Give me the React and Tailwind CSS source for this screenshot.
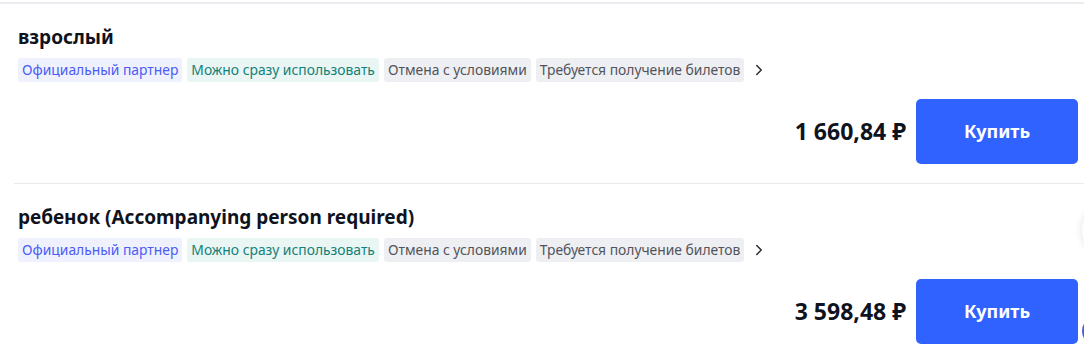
import { ChevronRight } from "lucide-react";

const tags = [
  { text: "Официальный партнер", cls: "bg-[#eff1ff] text-[#4b5cf5]" },
  { text: "Можно сразу использовать", cls: "bg-[#e9f6f4] text-[#13807a]" },
  { text: "Отмена с условиями", cls: "bg-[#eeeff2] text-[#51545c]" },
  { text: "Требуется получение билетов", cls: "bg-[#eeeff2] text-[#51545c]" },
];

const tickets = [
  { title: "взрослый", price: "1 660,84 ₽" },
  { title: "ребенок (Accompanying person required)", price: "3 598,48 ₽" },
];

const TicketRow = ({ title, price }) => {
  return (
    <div className="ml-[14px] border-b border-[#e9e9ee] pl-[4px] pr-[6px] pt-[21px] pb-[19px]">
      <div className="h-[24px] text-[19px] font-bold leading-[24px] text-[#0f1320]">
        {title}
      </div>
      <div className="mt-[9px] flex items-center gap-[5px]">
        {tags.map((t) => (
          <span
            key={t.text}
            className={`h-[24px] rounded-[3px] px-[4px] text-[13.85px] leading-[24px] ${t.cls}`}
          >
            {t.text}
          </span>
        ))}
        <ChevronRight className="ml-[1px] h-[18px] w-[18px] text-[#2a2d35]" strokeWidth={2} />
      </div>
      <div className="mt-[17px] flex items-center justify-end gap-[10px]">
        <div className="text-[23px] font-bold text-[#0f1320]">{price}</div>
        <button className="h-[65px] w-[162px] rounded-[5px] bg-[#3062ff] text-[18px] font-bold text-white">
          Купить
        </button>
      </div>
    </div>
  );
};

export default function App() {
  return (
    <div className="relative h-[360px] w-[1084px] overflow-hidden bg-white pt-[2px] font-['Noto_Sans',sans-serif]">
      <div className="h-[2px] bg-[#ebebf0]" />
      {tickets.map((t) => (
        <TicketRow key={t.title} title={t.title} price={t.price} />
      ))}
      <div className="absolute left-[1082px] top-[204px] h-[52px] w-[52px] rounded-full bg-white shadow-[0_0_8px_rgba(0,0,0,0.12)]" />
      <div className="absolute left-[1082px] top-[316px] h-[30px] w-[30px] rounded-full bg-[#4f5bd5]" />
    </div>
  );
}
